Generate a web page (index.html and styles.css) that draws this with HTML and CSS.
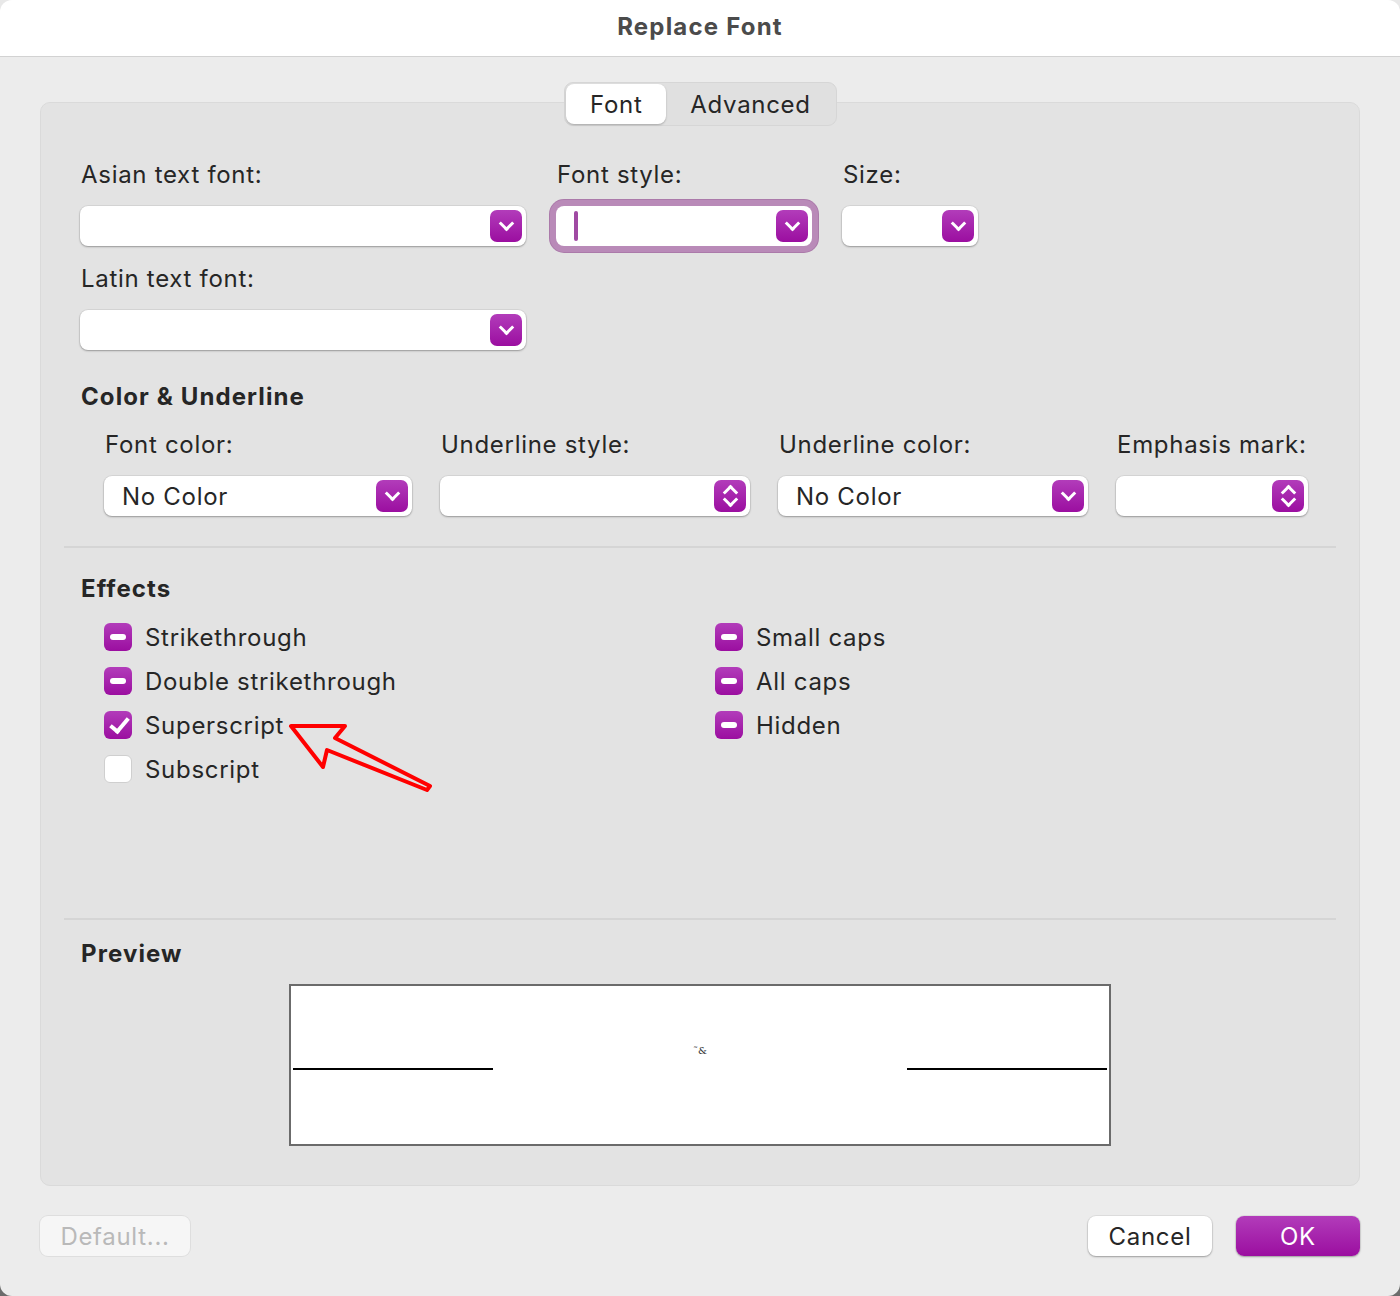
FILE: index.html
```html
<!DOCTYPE html>
<html lang="en">
<head>
<meta charset="UTF-8" />
<title>Replace Font</title>
<link rel="stylesheet" href="styles.css">
</head>
<body>

<div class="window">
  <header class="titlebar">Replace Font</header>

  <div class="content">
    <div class="tabs">
      <div class="tab active">Font</div>
      <div class="tab">Advanced</div>
    </div>

    <section class="group">
      <!-- font pickers -->
      <div class="row">
        <div class="field w-asian">
          <div class="label">Asian text font:</div>
          <div class="select"><span class="value"></span><span class="btn chev"></span></div>
        </div>
        <div class="field w-style">
          <div class="label">Font style:</div>
          <div class="select focused"><span class="caret"></span><span class="btn chev"></span></div>
        </div>
        <div class="field w-size">
          <div class="label">Size:</div>
          <div class="select"><span class="value"></span><span class="btn chev"></span></div>
        </div>
      </div>

      <div class="field w-asian latin">
        <div class="label">Latin text font:</div>
        <div class="select"><span class="value"></span><span class="btn chev"></span></div>
      </div>

      <h3 class="heading color-head">Color &amp; Underline</h3>
      <div class="row indent">
        <div class="field w-color">
          <div class="label">Font color:</div>
          <div class="select"><span class="value">No Color</span><span class="btn chev"></span></div>
        </div>
        <div class="field w-uline">
          <div class="label">Underline style:</div>
          <div class="select"><span class="value"></span><span class="btn updown"></span></div>
        </div>
        <div class="field w-uline">
          <div class="label">Underline color:</div>
          <div class="select"><span class="value">No Color</span><span class="btn chev"></span></div>
        </div>
        <div class="field w-emph">
          <div class="label">Emphasis mark:</div>
          <div class="select"><span class="value"></span><span class="btn updown"></span></div>
        </div>
      </div>

      <hr class="sep first">

      <h3 class="heading">Effects</h3>
      <div class="effects">
        <div class="col">
          <label class="check"><span class="box mixed"></span>Strikethrough</label>
          <label class="check"><span class="box mixed"></span>Double strikethrough</label>
          <label class="check"><span class="box checked"></span>Superscript</label>
          <label class="check"><span class="box"></span>Subscript</label>
        </div>
        <div class="col">
          <label class="check"><span class="box mixed"></span>Small caps</label>
          <label class="check"><span class="box mixed"></span>All caps</label>
          <label class="check"><span class="box mixed"></span>Hidden</label>
        </div>
      </div>

      <hr class="sep second">

      <h3 class="heading">Preview</h3>
      <div class="preview">
        <span class="pline"></span>
        <span class="sample">˜&amp;</span>
        <span class="pline"></span>
      </div>
    </section>

    <footer class="buttons">
      <button class="button disabled">Default...</button>
      <div class="right">
        <button class="button">Cancel</button>
        <button class="button primary">OK</button>
      </div>
    </footer>
  </div>

  <!-- annotation arrow -->
  <svg class="arrow" width="160" height="90" viewBox="280 715 160 90">
    <polygon points="291,726 345,726 335,738 430,786 427,790 327,750 323,767" fill="none" stroke="#ff0000" stroke-width="4" stroke-linejoin="round"/>
  </svg>
</div>

</body>
</html>
```

FILE: styles.css
```css
* {
  box-sizing: border-box;
  margin: 0; padding: 0;
}
html, body {
  height: 100%;
}
body {
  font-family: Inter, 'Noto Sans', sans-serif;
  color: #262626;
  letter-spacing: 0.7px;
  background: linear-gradient(#e8e8e8, #e8e8e8 50%, #6b6b6b);
  overflow: hidden;
}
.window {
  position: relative;
  width: 1400px;
  height: 1296px;
  background: #ececec;
  border-radius: 12px;
  overflow: hidden;
  display: flex;
  flex-direction: column;
}
.titlebar {
  height: 57px;
  background: #fff;
  border-bottom: 1px solid #d2d2d2;
  display: flex;
  align-items: center;
  justify-content: center;
  font-size: 24px;
  font-weight: 700;
  letter-spacing: 1.2px;
  color: #4b4b4b;
  padding-bottom: 3px;
}
.content {
  padding: 25px 40px 0;
  display: flex;
  flex-direction: column;
}

/* segmented tabs */
.tabs {
  align-self: center;
  position: relative;
  z-index: 2;
  display: flex;
  margin-bottom: -24px;
  margin-left: 1px;
  background: #e0e0e0;
  border: 1px solid #d6d6d6;
  border-radius: 9px;
  padding: 1px;
  height: 44px;
}
.tab {
  font-size: 24px;
  padding: 0 24px;
  display: flex;
  align-items: center;
  border-radius: 8px;
  color: #262626;
}
.tab.active {
  background: #fff;
  width: 100px;
  justify-content: center;
  box-shadow: 0 1px 2px rgba(0,0,0,0.25);
}

.group {
  height: 1084px;
  background: #e3e3e3;
  border: 1px solid #dadada;
  border-radius: 10px;
  padding: 57px 39px 0;
}
.row {
  display: flex;
  gap: 30px;
}
.row.indent {
  padding-left: 24px;
  gap: 28px;
}
.label {
  font-size: 24px;
  line-height: 30px;
  padding-left: 1px;
  margin-bottom: 16px;
}
.field { flex: none; }
.w-asian { width: 446px; }
.w-style { width: 256px; }
.w-size  { width: 136px; }
.w-color { width: 308px; }
.w-uline { width: 310px; }
.w-emph  { width: 192px; }
.latin {
  margin-top: 18px;
}

.select {
  height: 40px;
  background: #fff;
  border-radius: 8px;
  box-shadow: 0 0 0 1px rgba(0,0,0,0.05), 0 1px 2px rgba(0,0,0,0.3);
  display: flex;
  align-items: center;
  justify-content: space-between;
  padding: 0 4px 0 18px;
}
.select.focused {
  box-shadow: 0 0 0 6px #b98ab8, 0 0 0 7px #ab7aaa;
}
.value {
  font-size: 24px;
  color: #262626;
}
.caret {
  width: 4px;
  height: 30px;
  border-radius: 2px;
  background: #a04aa3;
}
.btn {
  width: 32px;
  height: 32px;
  border-radius: 7px;
  background: linear-gradient(#b23cba, #9b0ea0);
  position: relative;
  flex: none;
}
.chev::after,
.updown::before,
.updown::after {
  content: '';
  position: absolute;
  left: 11px;
  width: 8px;
  height: 8px;
  border-right: 3px solid #fff;
  border-bottom: 3px solid #fff;
  transform: rotate(45deg);
}
.chev::after { top: 8px; }
.updown::before {
  top: 7px;
  transform: rotate(-135deg);
}
.updown::after { top: 14px; }

.heading {
  font-size: 24px;
  font-weight: 700;
  letter-spacing: 1.1px;
  line-height: 30px;
  padding-left: 1px;
}
.color-head {
  margin: 32px 0 18px;
}
.sep {
  border: none;
  height: 2px;
  background: #d5d5d5;
  margin: 0 -16px;
}
.sep.first {
  margin-top: 30px;
  margin-bottom: 26px;
}
.sep.second {
  margin-top: 127px;
  margin-bottom: 19px;
}

.effects {
  display: flex;
  padding-left: 24px;
  margin-top: 11px;
}
.col {
  width: 611px;
  flex: none;
  display: flex;
  flex-direction: column;
}
.check {
  height: 44px;
  display: flex;
  align-items: center;
  gap: 13px;
  font-size: 24px;
}
.box {
  width: 28px;
  height: 28px;
  border-radius: 6px;
  background: #fff;
  border: 1px solid #cfcfcf;
  position: relative;
  flex: none;
}
.box.mixed,
.box.checked {
  border: none;
  background: linear-gradient(#b23cba, #9b0ea0);
}
.box.mixed::after {
  content: '';
  position: absolute;
  left: 6px;
  top: 11px;
  width: 16px;
  height: 6px;
  border-radius: 3px;
  background: #fff;
}
.box.checked::after {
  content: '';
  position: absolute;
  left: 10px;
  top: 3px;
  width: 7px;
  height: 15px;
  border-right: 4px solid #fff;
  border-bottom: 4px solid #fff;
  transform: rotate(40deg);
}

.preview {
  margin: 15px auto 0;
  width: 822px;
  height: 162px;
  background: #fff;
  border: 2px solid #6b6b6b;
  display: flex;
  align-items: center;
  justify-content: space-between;
  padding: 0 2px;
}
.pline {
  width: 200px;
  height: 2px;
  background: #000;
  margin-top: 8px;
}
.sample {
  font-family: 'DejaVu Serif', serif;
  font-size: 10px;
  letter-spacing: 0;
  color: #333;
  margin: 0 0 30px 0;
}

.buttons {
  margin-top: 30px;
  display: flex;
  justify-content: space-between;
}
.right {
  display: flex;
  gap: 24px;
}
.button {
  font-family: Inter, 'Noto Sans', sans-serif;
  font-size: 24px;
  letter-spacing: 0.7px;
  height: 40px;
  width: 124px;
  border: none;
  border-radius: 8px;
  background: #fff;
  color: #262626;
  box-shadow: 0 0 0 1px rgba(0,0,0,0.05), 0 1px 2px rgba(0,0,0,0.3);
}
.button.disabled {
  width: 150px;
  background: #f6f6f6;
  color: #b9b9b9;
  box-shadow: 0 0 0 1px rgba(0,0,0,0.06);
}
.button.primary {
  background: linear-gradient(#b23cba, #9b0ea0);
  color: #fff;
}

.arrow {
  position: absolute;
  left: 280px;
  top: 715px;
}
```
